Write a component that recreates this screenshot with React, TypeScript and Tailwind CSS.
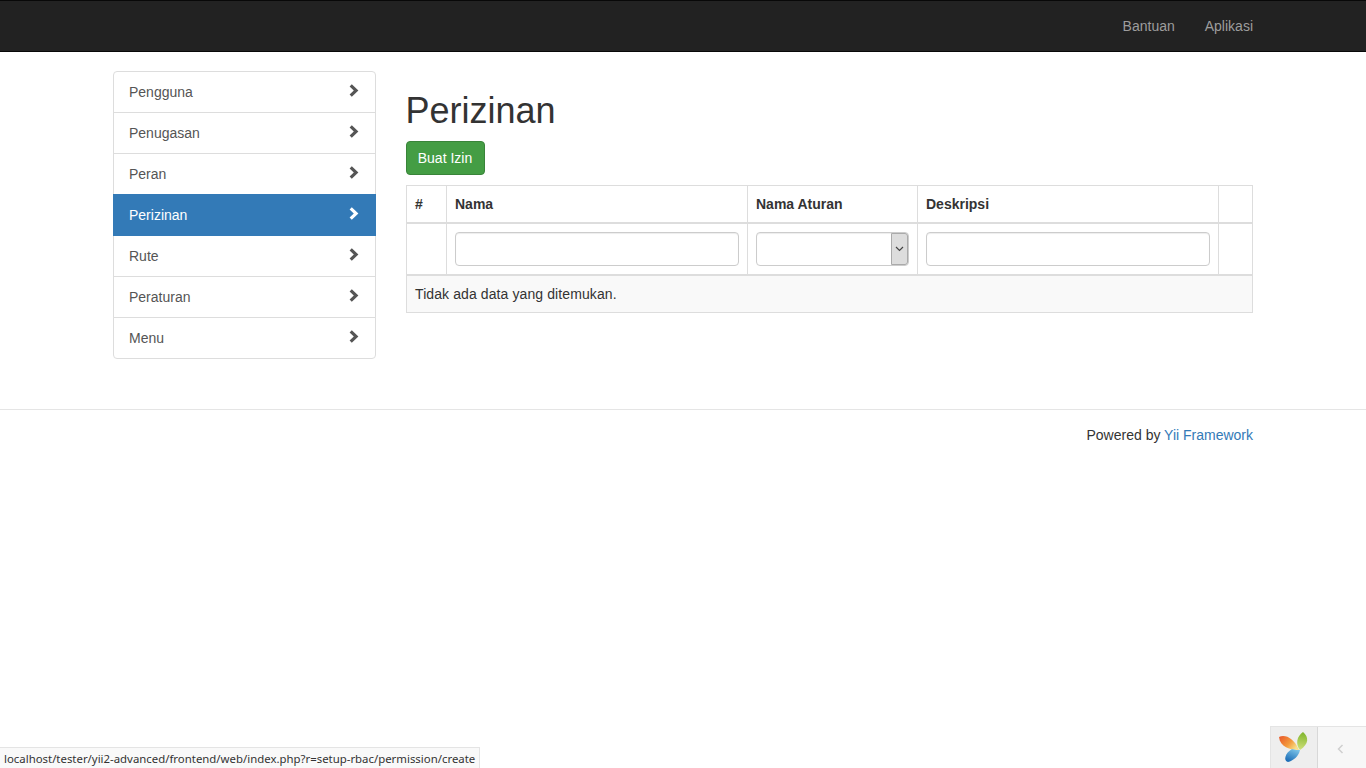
const menu = ["Pengguna", "Penugasan", "Peran", "Perizinan", "Rute", "Peraturan", "Menu"];

function Chevron(props: { className: string }) {
  return (
    <svg width="10" height="13" viewBox="0 0 10 13" className={props.className}>
      <polygon points="0.6,2.4 2.8,0.2 9.4,6.5 2.8,12.8 0.6,10.6 4.8,6.5" fill="currentColor" />
    </svg>
  );
}

function YiiLogo() {
  return (
    <svg width="30" height="31" viewBox="0 0 30 31">
      <defs>
        <linearGradient id="yiiOrange" x1="0" y1="0" x2="1" y2="0.6">
          <stop offset="0" stopColor="#e8552a" />
          <stop offset="0.6" stopColor="#f39a3c" />
          <stop offset="1" stopColor="#f8e08a" />
        </linearGradient>
        <linearGradient id="yiiGreen" x1="0.5" y1="0" x2="0.4" y2="1">
          <stop offset="0" stopColor="#7fb52c" />
          <stop offset="1" stopColor="#cfe07a" />
        </linearGradient>
        <linearGradient id="yiiBlue" x1="0.7" y1="0" x2="0.2" y2="1">
          <stop offset="0" stopColor="#7cc4e8" />
          <stop offset="1" stopColor="#1668b4" />
        </linearGradient>
      </defs>
      <path d="M0 5 C6 2 15 6 20 18 C11 18 1 15 0 5 Z" fill="url(#yiiOrange)" />
      <path d="M24 0 C30 5 30 12 21 18 C16 12 18 4 24 0 Z" fill="url(#yiiGreen)" />
      <path d="M13 17 C16 18 19 18 21 18 C20 24 14 29 9 30 C4 29 6 21 13 17 Z" fill="url(#yiiBlue)" />
    </svg>
  );
}

export default function App() {
  return (
    <div className="min-h-[768px] bg-white font-['Liberation_Sans',Arial,sans-serif] text-[14px] leading-[20px] text-[#333]">
      <nav className="h-[52px] bg-[#222] border-t border-b border-[#080808]">
        <div className="w-[1170px] mx-auto px-[15px] flex justify-end">
          <a className="px-[15px] py-[15px] text-[#9d9d9d]">Bantuan</a>
          <a className="pl-[15px] py-[15px] text-[#9d9d9d]">Aplikasi</a>
        </div>
      </nav>

      <div className="w-[1170px] mx-auto px-[15px] pt-[19px] flex h-[357px]">
        <div className="w-[262.5px] shrink-0">
          <div className="flex flex-col">
            {menu.map((item, i) => (
              <div
                key={item}
                className={
                  "h-[42px] -mb-px pl-[15px] pr-[16px] flex items-center justify-between border " +
                  (item === "Perizinan"
                    ? "bg-[#337ab7] border-[#337ab7] text-white relative "
                    : "bg-white border-[#ddd] text-[#555] ") +
                  (i === 0 ? "rounded-t " : "") +
                  (i === menu.length - 1 ? "rounded-b " : "")
                }
              >
                <span>{item}</span>
                <Chevron className="-mt-[3px]" />
              </div>
            ))}
          </div>
        </div>

        <div className="ml-[30px] flex-1">
          <h1 className="text-[36px] leading-[40px] text-[#333] mt-[20px] mb-[10px] font-normal">Perizinan</h1>
          <button className="h-[34px] w-[79px] bg-[#449d44] border border-[#398439] rounded text-white">Buat Izin</button>
          <table className="mt-[10px] w-[847.5px] border-collapse table-fixed border border-[#ddd]">
            <colgroup>
              <col className="w-[40px]" />
              <col className="w-[301px]" />
              <col className="w-[170px]" />
              <col className="w-[301px]" />
              <col />
            </colgroup>
            <thead>
              <tr className="h-[37px]">
                <th className="border border-[#ddd] border-b-2 pl-[8.5px] text-left">#</th>
                <th className="border border-[#ddd] border-b-2 pl-[8.5px] text-left">Nama</th>
                <th className="border border-[#ddd] border-b-2 pl-[8.5px] text-left">Nama Aturan</th>
                <th className="border border-[#ddd] border-b-2 pl-[8.5px] text-left">Deskripsi</th>
                <th className="border border-[#ddd] border-b-2"></th>
              </tr>
            </thead>
            <tbody>
              <tr className="h-[52px]">
                <td className="border border-[#ddd] border-b-2"></td>
                <td className="border border-[#ddd] border-b-2 px-[8px]">
                  <input className="block w-full h-[34px] border border-[#ccc] rounded shadow-[inset_0_1px_1px_rgba(0,0,0,0.075)]" />
                </td>
                <td className="border border-[#ddd] border-b-2 px-[8px]">
                  <div className="relative h-[34px]">
                    <select className="block w-full h-[34px] appearance-none bg-white border border-[#ccc] rounded shadow-[inset_0_1px_1px_rgba(0,0,0,0.075)]"></select>
                    <div className="absolute right-px top-px w-[17px] h-[32px] bg-[#ddd] border border-[#aaa] rounded-r-[3px] flex items-center justify-center">
                      <svg width="9" height="6" viewBox="0 0 9 6">
                        <path d="M1 1 L4.5 4.5 L8 1" fill="none" stroke="#444" strokeWidth="1.2" />
                      </svg>
                    </div>
                  </div>
                </td>
                <td className="border border-[#ddd] border-b-2 px-[8px]">
                  <input className="block w-full h-[34px] border border-[#ccc] rounded shadow-[inset_0_1px_1px_rgba(0,0,0,0.075)]" />
                </td>
                <td className="border border-[#ddd] border-b-2"></td>
              </tr>
              <tr className="h-[38px] bg-[#f9f9f9]">
                <td colSpan={5} className="border border-[#ddd] pl-[8.5px] tracking-[0.1px]">Tidak ada data yang ditemukan.</td>
              </tr>
            </tbody>
          </table>
        </div>
      </div>

      <footer className="h-[60px] border-t border-[#e5e5e5] pt-[15px]">
        <div className="w-[1170px] mx-auto px-[15px] text-right">
          Powered by <a className="text-[#337ab7]">Yii Framework</a>
        </div>
      </footer>

      <div className="absolute left-0 bottom-0 h-[21px] w-[480px] bg-[#f9f9f9] border-t border-r border-[#e4e4e4] pl-[4px] font-['Noto_Sans',sans-serif] text-[11.4px] leading-[22px] text-[#333] whitespace-nowrap">
        localhost/tester/yii2-advanced/frontend/web/index.php?r=setup-rbac/permission/create
      </div>

      <div className="absolute right-0 bottom-0 h-[42px] w-[96px] flex border-t border-l border-[#e4e4e4] bg-[#f7f7f7]">
        <div className="w-[47px] bg-[#eeeeee] border-r border-[#d8d8d8] flex items-center justify-center">
          <YiiLogo />
        </div>
        <div className="flex-1 flex items-center justify-center pr-[4px] pt-[2px]">
          <svg width="7" height="10" viewBox="0 0 7 10">
            <path d="M5.5 1 L1.5 5 L5.5 9" fill="none" stroke="#cfcfcf" strokeWidth="1.5" />
          </svg>
        </div>
      </div>
    </div>
  );
}
